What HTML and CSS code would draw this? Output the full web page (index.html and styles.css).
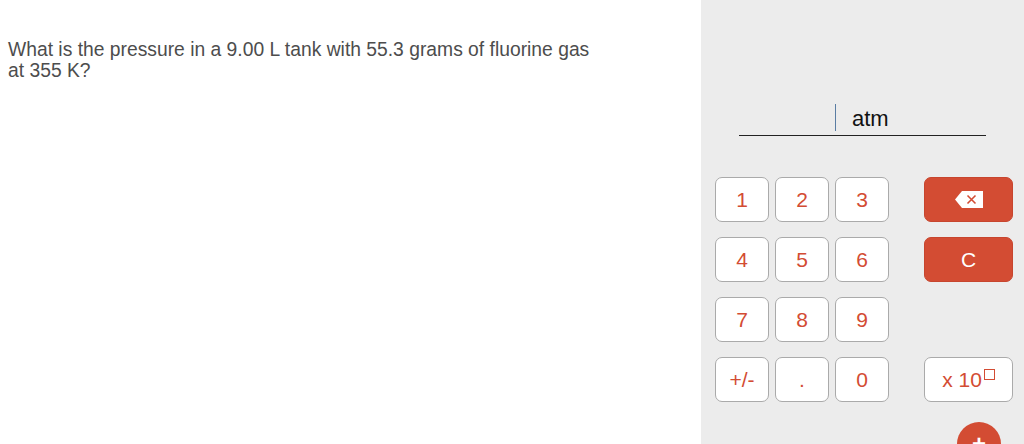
FILE: index.html
```html
<!DOCTYPE html>
<html>
<head>
    <title>Gas Pressure Question</title>
    <link rel="stylesheet" href="styles.css">
</head>
<body>
    <div class="page">
        <div class="question">
            <p>What is the pressure in a 9.00 L tank with 55.3 grams of fluorine gas at 355 K?</p>
        </div>
        <div class="panel">
            <div class="answer">
                <span class="cursor"></span>
                <span class="unit">atm</span>
            </div>
            <div class="keypad">
                <button class="key">1</button>
                <button class="key">2</button>
                <button class="key">3</button>
                <span></span>
                <button class="key action" aria-label="Backspace">
                    <svg width="28" height="17" viewBox="0 0 28 17">
                        <path d="M0 8.5 L7 0 H28 V17 H7 Z" fill="#fff"/>
                        <path d="M12.5 4.5 L20.5 12.5 M20.5 4.5 L12.5 12.5" stroke="#d34c33" stroke-width="1.6"/>
                    </svg>
                </button>

                <button class="key">4</button>
                <button class="key">5</button>
                <button class="key">6</button>
                <span></span>
                <button class="key action">C</button>

                <button class="key">7</button>
                <button class="key">8</button>
                <button class="key">9</button>
                <span></span>
                <span></span>

                <button class="key">+/-</button>
                <button class="key">.</button>
                <button class="key">0</button>
                <span></span>
                <button class="key">x 10<span class="exp"></span></button>
            </div>
            <div class="fab">+</div>
        </div>
    </div>
</body>
</html>
```

FILE: styles.css
```css
body {
    margin: 0;
    font-family: "Liberation Sans", Arial, sans-serif;
    overflow: hidden;
}
.page {
    display: flex;
    height: 444px;
}
.question {
    width: 701px;
    flex-shrink: 0;
    background-color: #fff;
}
.question p {
    margin: 0;
    padding: 39px 0 0 8px;
    width: 596px;
    font-size: 19.3px;
    line-height: 21px;
    color: #4d4d4d;
}
.panel {
    position: relative;
    flex: 1;
    background-color: #ececec;
    padding-left: 14px;
}
.answer {
    display: flex;
    align-items: flex-end;
    margin: 104px 0 0 24px;
    width: 247px;
    height: 31px;
    border-bottom: 1px solid #222;
}
.cursor {
    width: 1px;
    height: 27px;
    margin: 0 16px 4px 96px;
    background-color: #5a7da3;
}
.unit {
    font-size: 22px;
    line-height: 24px;
    margin-bottom: 4px;
    color: #111;
}
.keypad {
    display: grid;
    grid-template-columns: 54px 54px 54px 23px 89px;
    grid-auto-rows: 45px;
    column-gap: 6px;
    row-gap: 15px;
    margin-top: 41px;
}
.key {
    display: flex;
    align-items: center;
    justify-content: center;
    padding: 0;
    background-color: #fff;
    border: 1px solid #aaa;
    border-radius: 7px;
    color: #d34c33;
    font-family: "Liberation Sans", Arial, sans-serif;
    font-size: 21px;
    cursor: pointer;
}
.key.action {
    background-color: #d34c33;
    border-color: #c7452e;
    color: #fff;
}
.exp {
    display: inline-block;
    width: 9px;
    height: 9px;
    margin: 0 0 11px 2px;
    border: 1px solid #d34c33;
}
.fab {
    position: absolute;
    left: 256px;
    top: 422px;
    width: 44px;
    height: 44px;
    border-radius: 50%;
    background-color: #d34c33;
    color: #fff;
    font-size: 24px;
    font-weight: bold;
    line-height: 44px;
    text-align: center;
}
```
